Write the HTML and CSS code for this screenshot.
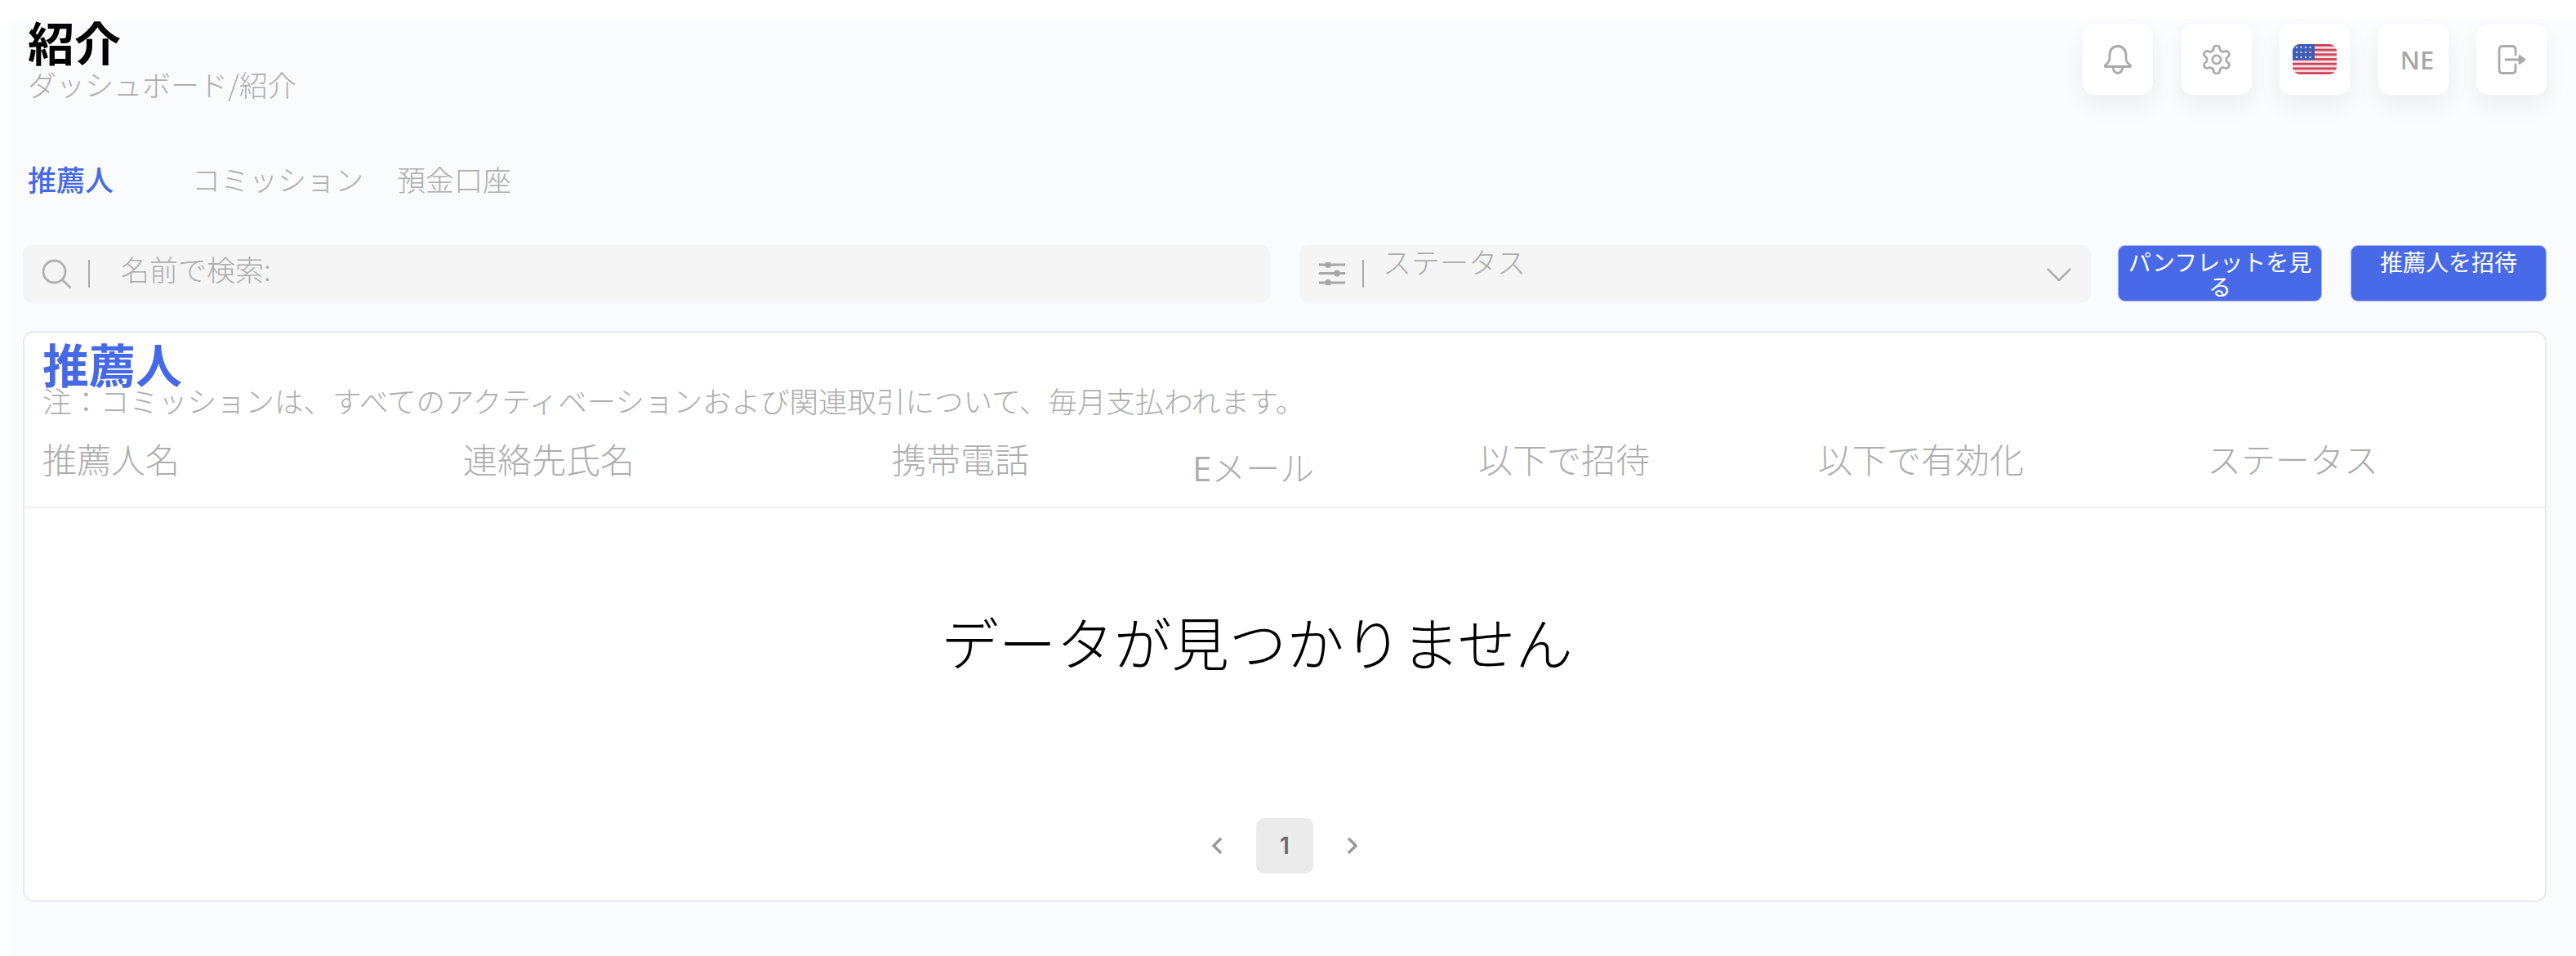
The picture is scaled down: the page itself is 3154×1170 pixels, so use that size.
FILE: index.html
```html
<!DOCTYPE html>
<html lang="ja">
<head>
    <meta charset="UTF-8">
    <title>紹介</title>
    <link rel="stylesheet" href="styles.css">
</head>
<body>
    <div class="page">
        <!-- Header -->
        <div class="header">
            <div class="title-block">
                <h1 class="page-title">紹介</h1>
                <div class="breadcrumb">ダッシュボード/紹介</div>
            </div>
            <div class="header-actions">
                <div class="action-box">
                    <svg class="action-icon" viewBox="0 0 34 36">
                        <path d="M17 1.500c-6.500 0-10 5-10 11v4c0 3.500-2.500 6-5.500 8.500-.8.800-.3 1.500.7 1.500h29.600c1 0 1.500-.7.700-1.500C29 22.500 27 20 27 16.500v-4c0-6-3.500-11-10-11z"/>
                        <path d="M11 26.500c0 4.500 2.500 8 6 8s6-3.500 6-8"/>
                    </svg>
                </div>
                <div class="action-box">
                    <svg class="action-icon gear-icon" viewBox="1.500 1.500 21 21">
                        <circle cx="12" cy="12" r="3"/>
                        <path d="M12.220 2h-.44a2 2 0 0 0-2 2v.18a2 2 0 0 1-1 1.730l-.43.25a2 2 0 0 1-2 0l-.15-.08a2 2 0 0 0-2.730.73l-.22.38a2 2 0 0 0 .73 2.730l.15.1a2 2 0 0 1 1 1.720v.51a2 2 0 0 1-1 1.740l-.15.09a2 2 0 0 0-.73 2.730l.22.38a2 2 0 0 0 2.730.73l.15-.08a2 2 0 0 1 2 0l.43.25a2 2 0 0 1 1 1.730V20a2 2 0 0 0 2 2h.44a2 2 0 0 0 2-2v-.18a2 2 0 0 1 1-1.730l.43-.25a2 2 0 0 1 2 0l.15.08a2 2 0 0 0 2.730-.73l.22-.39a2 2 0 0 0-.73-2.730l-.15-.08a2 2 0 0 1-1-1.740v-.5a2 2 0 0 1 1-1.740l.15-.09a2 2 0 0 0 .73-2.730l-.22-.38a2 2 0 0 0-2.730-.73l-.15.08a2 2 0 0 1-2 0l-.43-.25a2 2 0 0 1-1-1.730V4a2 2 0 0 0-2-2z"/>
                    </svg>
                </div>
                <div class="action-box">
                    <svg class="flag" viewBox="0 0 54 37">
                        <rect width="54" height="37" fill="#f5dde0"/>
                        <g fill="#cc4259">
                            <rect y="0" width="54" height="2.800"/>
                            <rect y="5.700" width="54" height="2.800"/>
                            <rect y="11.400" width="54" height="2.800"/>
                            <rect y="17.100" width="54" height="2.800"/>
                            <rect y="22.800" width="54" height="2.800"/>
                            <rect y="28.500" width="54" height="2.800"/>
                            <rect y="34.200" width="54" height="2.800"/>
                        </g>
                        <rect width="27" height="19.500" fill="#3f5cb5"/>
                        <g fill="#c9d3f2">
                            <circle cx="5" cy="4" r="1.200"/><circle cx="10.500" cy="4" r="1.200"/><circle cx="16" cy="4" r="1.200"/><circle cx="21.500" cy="4" r="1.200"/>
                            <circle cx="5" cy="10" r="1.200"/><circle cx="10.500" cy="10" r="1.200"/><circle cx="16" cy="10" r="1.200"/><circle cx="21.500" cy="10" r="1.200"/>
                            <circle cx="5" cy="16" r="1.200"/><circle cx="10.500" cy="16" r="1.200"/><circle cx="16" cy="16" r="1.200"/><circle cx="21.500" cy="16" r="1.200"/>
                        </g>
                    </svg>
                </div>
                <div class="action-box user-initials">NE</div>
                <div class="action-box">
                    <svg class="action-icon" viewBox="0 0 34 36">
                        <path d="M22 12V6c0-3-1.500-4.500-4-4.500H6C3.500 1.500 2 3 2 6v24c0 3 1.500 4.500 4 4.500h12c2.500 0 4-1.500 4-4.500v-6"/>
                        <path d="M10 18h18"/>
                        <path class="logout-head" d="M27 13.500l6 4.500-6 4.500z"/>
                    </svg>
                </div>
            </div>
        </div>

        <!-- Tabs -->
        <div class="tabs">
            <div class="tab tab-active">推薦人</div>
            <div class="tab">コミッション</div>
            <div class="tab">預金口座</div>
        </div>

        <!-- Toolbar -->
        <div class="toolbar">
            <div class="field">
                <svg class="search-icon" viewBox="0 0 36 36">
                    <circle cx="15.500" cy="15.500" r="13.500"/>
                    <path d="M25.500 25.500l9 9"/>
                </svg>
                <span class="field-bar"></span>
                <span class="field-text">名前で検索:</span>
            </div>
            <div class="field field-status">
                <svg class="filter-icon" viewBox="0 0 32 28">
                    <path d="M0 3h32M0 13.500h32M0 25h32"/>
                    <circle cx="11" cy="3" r="2.500"/>
                    <circle cx="22" cy="13.500" r="2.500"/>
                    <circle cx="11" cy="25" r="2.500"/>
                </svg>
                <span class="field-bar"></span>
                <span class="status-text">ステータス</span>
                <svg class="chevron-down" viewBox="0 0 30 16">
                    <path d="M1 1l14 14L29 1"/>
                </svg>
            </div>
            <button class="button button-leaflet">パンフレットを見る</button>
            <button class="button button-invite">推薦人を招待</button>
        </div>

        <!-- Table card -->
        <div class="card">
            <h2 class="card-title">推薦人</h2>
            <div class="card-note">注：コミッションは、すべてのアクティベーションおよび関連取引について、毎月支払われます。</div>
            <div class="table-head">
                <div>推薦人名</div>
                <div>連絡先氏名</div>
                <div>携帯電話</div>
                <div class="head-email"><span class="latin">E</span>メール</div>
                <div>以下で招待</div>
                <div>以下で有効化</div>
                <div>ステータス</div>
            </div>
            <div class="no-data">データが見つかりません</div>
            <div class="pagination">
                <svg class="page-arrow" viewBox="0 0 14 22"><path d="M12 2L3 11l9 9"/></svg>
                <div class="page-number">1</div>
                <svg class="page-arrow" viewBox="0 0 14 22"><path d="M2 2l9 9-9 9"/></svg>
            </div>
        </div>
    </div>
</body>
</html>
```

FILE: styles.css
```css
/* General Reset and Basic Styles */
* {
    margin: 0;
    padding: 0;
    box-sizing: border-box;
}

body {
    font-family: "Noto Sans CJK JP", "Noto Sans", sans-serif;
    font-weight: 300;
    background-color: #fff;
    color: #adadad;
}

.page {
    width: 3142px;
    height: 1147px;
    margin: 23px 0 0 12px;
    padding: 0 36px 0 16px;
    background-color: #fafbfd;
}

/* Header */
.header {
    display: flex;
    justify-content: space-between;
    align-items: flex-start;
    height: 102px;
    padding-left: 6px;
}

.page-title {
    font-size: 57px;
    line-height: 54px;
    font-weight: 700;
    color: #000;
}

.breadcrumb {
    font-size: 35px;
    line-height: 40px;
    margin-top: 6px;
}

.header-actions {
    display: flex;
    gap: 34.500px;
    margin-top: 6px;
}

.action-box {
    width: 86px;
    height: 87px;
    display: flex;
    justify-content: center;
    align-items: center;
    background-color: #fff;
    border-radius: 14px;
    box-shadow: 0 14px 30px rgba(0, 0, 0, 0.05);
}

.action-icon {
    width: 34px;
    height: 36px;
    fill: none;
    stroke: #aaa;
    stroke-width: 2.800;
    stroke-linecap: round;
    stroke-linejoin: round;
}

.gear-icon {
    width: 36px;
    stroke-width: 1.600;
}

.logout-head {
    fill: #aaa;
}

.flag {
    width: 54px;
    height: 37px;
    border-radius: 9px;
}

.user-initials {
    padding-left: 10px;
    font-family: "Noto Sans", sans-serif;
    font-size: 31px;
    font-weight: 500;
    color: #a6a6a6;
}

/* Tabs */
.tabs {
    display: flex;
    gap: 41px;
    margin-top: 74px;
    padding-left: 6px;
    font-size: 35px;
    line-height: 40px;
}

.tab:first-child {
    width: 160px;
}

.tab-active {
    color: #4669e8;
    font-weight: 500;
}

/* Toolbar */
.toolbar {
    display: flex;
    gap: 36px;
    margin-top: 61px;
    height: 70px;
}

.field {
    flex: 1;
    display: flex;
    align-items: center;
    padding-left: 23px;
    background-color: #f5f5f5;
    border-radius: 10px;
}

.field-status {
    flex: none;
    width: 969px;
    position: relative;
    padding-left: 24px;
}

.search-icon {
    width: 36px;
    height: 36px;
    fill: none;
    stroke: #b0b0b0;
    stroke-width: 2.800;
    stroke-linecap: round;
}

.filter-icon {
    width: 32px;
    height: 28px;
    fill: #a0a0a0;
    stroke: #a8a8a8;
    stroke-width: 2.800;
}

.field-bar {
    width: 2px;
    height: 34px;
    margin-left: 21px;
    background-color: #aaa;
}

.field-text {
    margin: 0 0 12px 38px;
    font-size: 35px;
    line-height: 40px;
}

.status-text {
    margin: 0 0 30px 23px;
    font-size: 35px;
    line-height: 40px;
}

.chevron-down {
    position: absolute;
    right: 24px;
    top: 28px;
    width: 30px;
    height: 16px;
    fill: none;
    stroke: #aeaeae;
    stroke-width: 2.600;
}

.button {
    flex: none;
    height: 69px;
    padding: 0 8px 30px;
    font-family: inherit;
    font-size: 28px;
    font-weight: 400;
    line-height: 30px;
    color: #fff;
    background-color: #4869e8;
    border: 1px solid #a5b6f4;
    border-radius: 9px;
}

.button-leaflet {
    width: 250px;
    margin-left: -3px;
    padding-bottom: 0;
}

.button-invite {
    width: 240px;
    margin-left: -1px;
}

/* Table card */
.card {
    height: 699px;
    margin-top: 35px;
    padding: 9px 0 0;
    background-color: #fff;
    border: 2px solid #e6eaf2;
    border-radius: 14px;
}

.card-title {
    padding-left: 22px;
    font-size: 57px;
    line-height: 56px;
    font-weight: 700;
    color: #4669e8;
}

.card-note {
    padding-left: 22px;
    font-size: 35.500px;
    line-height: 36px;
}

.table-head {
    display: grid;
    grid-template-columns: 515px 525px 368px 350px 416px 476px 1fr;
    height: 114px;
    padding: 33px 0 0 22px;
    font-size: 42px;
    line-height: 40px;
    border-bottom: 2px solid #f0f0f0;
}

.head-email {
    padding-top: 10px;
}

.latin {
    font-family: "Open Sans", sans-serif;
    font-weight: 500;
}

.no-data {
    padding: 117px 68px 0 0;
    text-align: center;
    font-size: 70.500px;
    line-height: 90px;
    color: #000;
}

.pagination {
    display: flex;
    justify-content: center;
    align-items: center;
    gap: 41px;
    margin-top: 172px;
}

.page-arrow {
    width: 14px;
    height: 22px;
    fill: none;
    stroke: #999;
    stroke-width: 3.400;
}

.page-number {
    width: 70px;
    height: 68px;
    display: flex;
    justify-content: center;
    align-items: center;
    font-family: Inter, sans-serif;
    font-size: 28px;
    font-weight: 600;
    color: #6a6a6a;
    background-color: #ebebeb;
    border-radius: 10px;
}
```
